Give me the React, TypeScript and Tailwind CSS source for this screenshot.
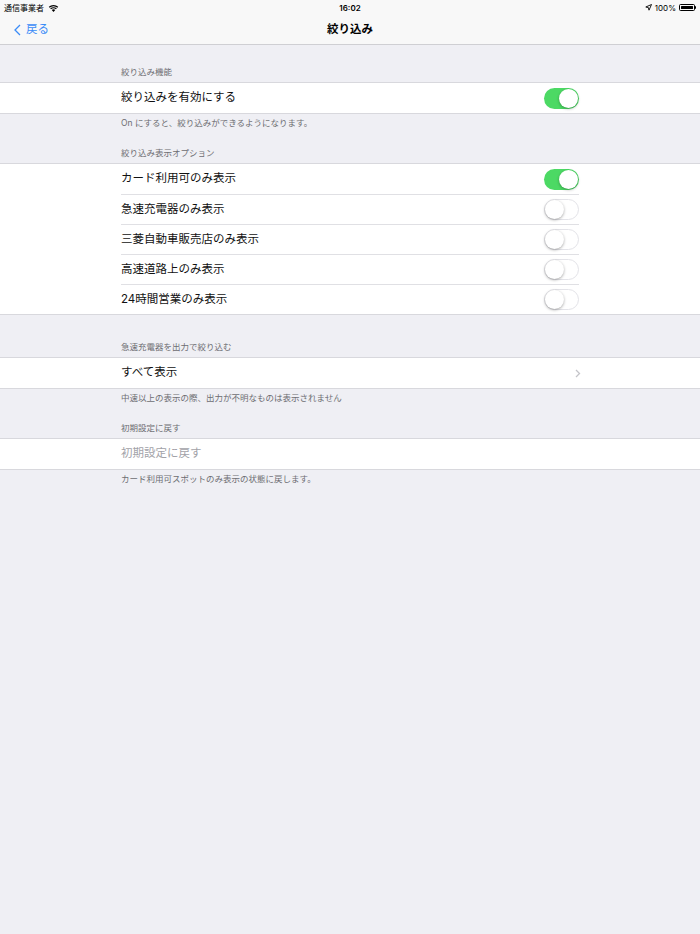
import React from "react";

const FONT = { fontFamily: 'Inter, "Noto Sans CJK JP", "Noto Sans", sans-serif' };

function Toggle({ on }: { on: boolean }) {
  return on ? (
    <div className="relative h-[21px] w-[35px] rounded-full bg-[#4cd964]">
      <div className="absolute right-[1px] top-[1px] h-[19px] w-[19px] rounded-full bg-white shadow-[0_1px_3px_rgba(0,0,0,0.3)]" />
    </div>
  ) : (
    <div className="relative h-[21px] w-[35px] rounded-full border border-[#e3e3e8] bg-white">
      <div className="absolute left-0 top-0 h-[19px] w-[19px] rounded-full bg-white shadow-[0_1px_3px_rgba(0,0,0,0.35)]" />
    </div>
  );
}

function Header({ text, h }: { text: string; h: string }) {
  return (
    <div className={`${h} flex items-end px-[121px] pb-[5px]`}>
      <span className="text-[8.5px] leading-[11px] text-[#6d6d72]">{text}</span>
    </div>
  );
}

function Footer({ text }: { text: string }) {
  return (
    <div className="px-[121px] pt-[5px]">
      <span className="block text-[8.5px] leading-[11px] text-[#6d6d72]">{text}</span>
    </div>
  );
}

function Group({ children }: { children: React.ReactNode }) {
  return (
    <div className="bg-white shadow-[0_-1px_0_#d8d8dd,0_1px_0_#d8d8dd]">{children}</div>
  );
}

function Row({
  label,
  first,
  right,
  muted,
}: {
  label: string;
  first?: boolean;
  right?: React.ReactNode;
  muted?: boolean;
}) {
  return (
    <div
      className={`mx-[121px] flex h-[30px] items-center justify-between ${
        first ? "" : "border-t border-[#e0e0e4]"
      }`}
    >
      <span className={`text-[11.5px] ${muted ? "text-[#a2a2a8]" : "text-[#111]"}`}>{label}</span>
      {right}
    </div>
  );
}

export default function App() {
  return (
    <div className="min-h-[934px] w-[700px] bg-[#efeff4]" style={FONT}>
      {/* status bar + nav */}
      <div className="border-b border-[#cfcfd3] bg-[#f8f8f8]">
        <div className="relative flex h-[15px] items-center justify-between px-[4px] text-[8px] text-black">
          <div className="flex items-center gap-[4px]">
            <span>通信事業者</span>
            <svg width="11" height="8" viewBox="0 0 11 8">
              <path d="M5.5 8 L3.8 6.1 A2.5 2.5 0 0 1 7.2 6.1 Z" fill="#000" />
              <path d="M2.6 4.9 A4.2 4.2 0 0 1 8.4 4.9" stroke="#000" strokeWidth="1.2" fill="none" />
              <path d="M1.2 3.3 A6.2 6.2 0 0 1 9.8 3.3" stroke="#000" strokeWidth="1.2" fill="none" />
            </svg>
          </div>
          <span className="absolute left-1/2 -translate-x-1/2 font-semibold">16:02</span>
          <div className="flex items-center gap-[3px]">
            <svg width="7" height="7" viewBox="0 0 7 7">
              <path d="M6.5 0.5 L0.8 3 L3.4 3.6 L4 6.2 Z" fill="none" stroke="#000" strokeWidth="0.9" strokeLinejoin="round" />
            </svg>
            <span>100%</span>
            <div className="flex items-center">
              <div className="h-[7px] w-[16px] rounded-[1.5px] border border-black p-[1px]">
                <div className="h-full w-full rounded-[0.5px] bg-black" />
              </div>
              <div className="h-[3px] w-[1px] rounded-r bg-black" />
            </div>
          </div>
        </div>
        <div className="relative flex h-[29px] items-center justify-center">
          <div className="absolute left-[14px] flex items-center gap-[5px] text-[#3b8cf7]">
            <svg width="7" height="12" viewBox="0 0 7 12">
              <path d="M6 1 L1 6 L6 11" stroke="#3b8cf7" strokeWidth="1.3" fill="none" />
            </svg>
            <span className="text-[11.5px]">戻る</span>
          </div>
          <span className="text-[11.5px] font-bold text-black">絞り込み</span>
        </div>
      </div>

      <Header text="絞り込み機能" h="h-[38px]" />
      <Group>
        <Row label="絞り込みを有効にする" first right={<Toggle on />} />
      </Group>
      <Footer text="On にすると、絞り込みができるようになります。" />

      <Header text="絞り込み表示オプション" h="h-[35px]" />
      <Group>
        <Row label="カード利用可のみ表示" first right={<Toggle on />} />
        <Row label="急速充電器のみ表示" right={<Toggle on={false} />} />
        <Row label="三菱自動車販売店のみ表示" right={<Toggle on={false} />} />
        <Row label="高速道路上のみ表示" right={<Toggle on={false} />} />
        <Row label="24時間営業のみ表示" right={<Toggle on={false} />} />
      </Group>

      <Header text="急速充電器を出力で絞り込む" h="h-[44px]" />
      <Group>
        <Row
          label="すべて表示"
          first
          right={
            <svg width="6" height="9" viewBox="0 0 6 9" className="mr-[-2px]">
              <path d="M1 1 L4.5 4.5 L1 8" stroke="#c4c4c9" strokeWidth="1.3" fill="none" />
            </svg>
          }
        />
      </Group>
      <Footer text="中速以上の表示の際、出力が不明なものは表示されません" />

      <Header text="初期設定に戻す" h="h-[35px]" />
      <Group>
        <Row label="初期設定に戻す" first muted />
      </Group>
      <Footer text="カード利用可スポットのみ表示の状態に戻します。" />
    </div>
  );
}
